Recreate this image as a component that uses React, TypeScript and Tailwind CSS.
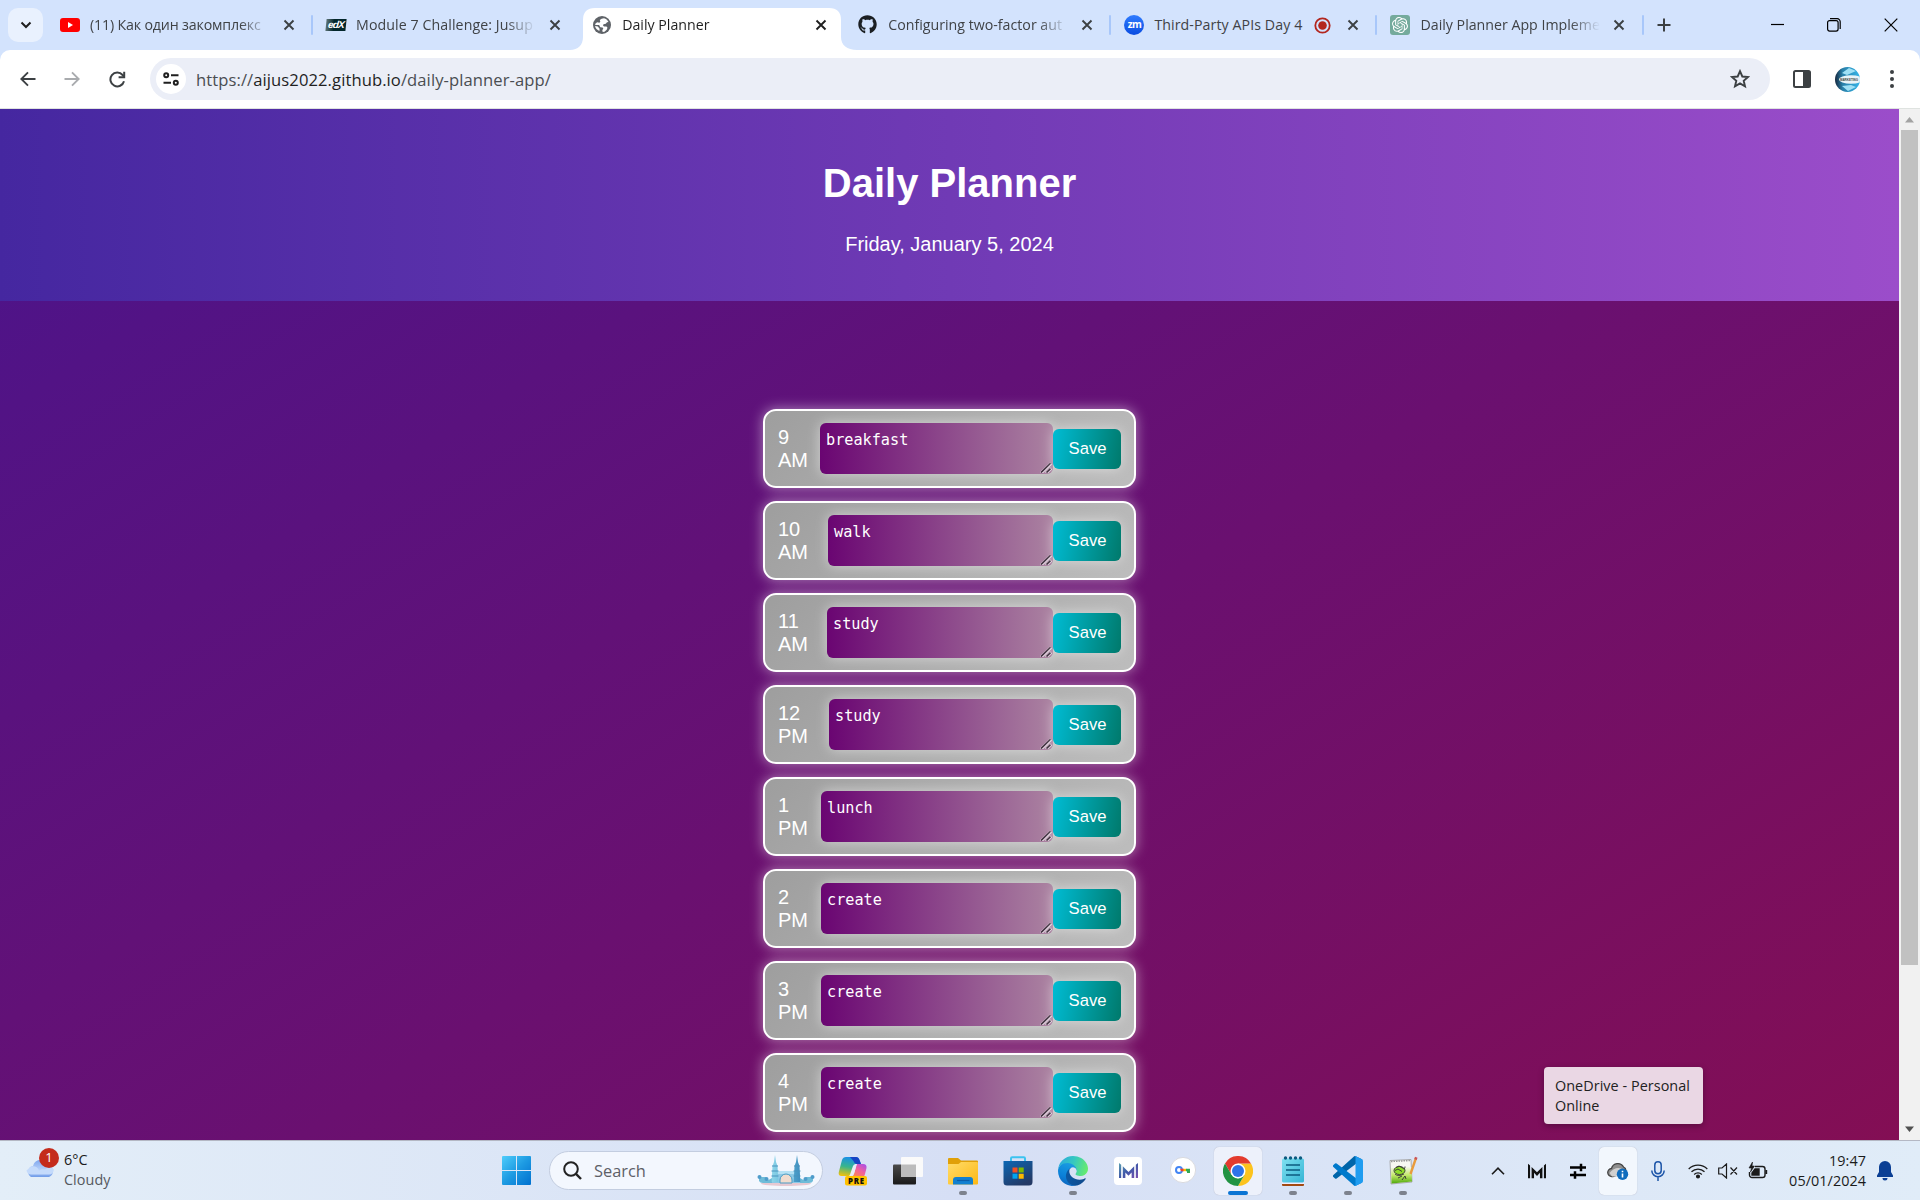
import React from "react";
import { FaGithub } from "react-icons/fa";
import { SiOpenai } from "react-icons/si";

function Close({ dark = false }: { dark?: boolean }) {
  return (
    <svg width="12" height="12" viewBox="0 0 12 12" className="shrink-0">
      <path d="M1.5 1.5 10.5 10.5M10.5 1.5 1.5 10.5" stroke={dark ? "#1f1f1f" : "#3c4043"} strokeWidth="1.9" fill="none" />
    </svg>
  );
}

function YouTubeIcon() {
  return (
    <svg width="20" height="20" viewBox="0 0 20 20">
      <rect x="0" y="3" width="20" height="14" rx="3" fill="#f00" />
      <path d="M8 7v6l5-3z" fill="#fff" />
    </svg>
  );
}

function EdxIcon() {
  return (
    <div className="flex h-5 w-5 items-center">
      <div className="flex h-3 w-5 -skew-x-6 items-center justify-center bg-linear-to-r from-[#5d7578] to-[#02262b] to-40% font-['Liberation_Sans'] text-[10px] leading-none font-bold tracking-[-0.8px] text-white italic">
        <span className="pb-px">edX</span>
      </div>
    </div>
  );
}

function GlobeIcon() {
  return (
    <svg width="20" height="20" viewBox="0 0 20 20">
      <circle cx="10" cy="10" r="9" fill="#5f6368" />
      <path d="M12 3.200c2 .5 3.600 1.800 4.500 3.800l-1.500.2-1.200 1.600-2.300.4-.5 1.200 1 1h2.500l1 1.400-.8 2-2.200 1.900-1.800.4-.4-1.900 1-1.700-.7-1.100-2.300-.2-1.200-2.200H3.400l-.3-.9 2-1.900 2.300.5.9-1-.5-1.700 1.800-1.300z" fill="#fff" />
      <path d="M3 11l2.800.6 1.800 2.100-.2 2.300C5 15 3.400 13.200 3 11z" fill="#fff" />
    </svg>
  );
}

function ZoomIcon() {
  return (
    <div className="flex h-5 w-5 items-center justify-center rounded-full bg-linear-to-b from-[#2f7bff] to-[#0a4be0] font-['Open_Sans'] text-[10px] leading-none font-bold tracking-[-0.6px] text-white">
      <span className="pb-[2px]">zm</span>
    </div>
  );
}

function GptIcon() {
  return (
    <div className="flex h-5 w-5 items-center justify-center rounded-[3px] bg-[#74aa9c] text-white">
      <SiOpenai size={16} />
    </div>
  );
}

function RecordIcon() {
  return (
    <svg width="17" height="17" viewBox="0 0 17 17" className="shrink-0">
      <circle cx="8.500" cy="8.500" r="7.200" stroke="#b3261e" strokeWidth="1.800" fill="none" />
      <circle cx="8.500" cy="8.500" r="4.300" fill="#b3261e" />
    </svg>
  );
}

type TabProps = { icon: React.ReactNode; title: string; active?: boolean; sep?: boolean; recording?: boolean; spacing: string };

function Tab({ icon, title, active, sep, recording, spacing }: TabProps) {
  return (
    <div className="relative flex h-[50px] w-[266.100px] shrink-0 items-center">
      {active && (
        <svg className="absolute top-0 left-[-7px]" width="287" height="50" viewBox="0 0 287 50">
          <path d="M0 50 C8 50 13 45 13 37 V20 Q13 8 25 8 H259 Q271 8 271 20 V37 C271 45 277 50 287 50 Z" fill="#fff" />
        </svg>
      )}
      <div className={sep ? "h-5 w-[2px] shrink-0 rounded-full bg-[#a8c7fa]" : "h-5 w-[2px] shrink-0"} />
      <div className="relative ml-[13px] h-5 w-5 shrink-0">{icon}</div>
      <div
        className={
          (active ? "relative text-[#1f1f1f] " : "text-[#3f4246] ") +
          (recording ? "w-[151px] " : "w-[180px] [mask-image:linear-gradient(to_right,black_calc(100%-30px),transparent)] ") +
          "ml-[10px] shrink-0 text-[14.200px] leading-5 whitespace-nowrap " + spacing
        }
      >
        {title}
      </div>
      {recording && <div className="mr-[9px] ml-[9px]"><RecordIcon /></div>}
      <div className={recording ? "relative ml-[7px]" : "relative ml-[13px]"}><Close dark={active} /></div>
    </div>
  );
}

function TabStrip() {
  return (
    <div className="flex h-[50px] items-center bg-[#d3e3fd]">
      <div className="ml-2 flex h-[34px] w-[35px] shrink-0 items-center justify-center rounded-[10px] bg-[#e9f1fe]">
        <svg width="12" height="8" viewBox="0 0 12 8"><path d="M1.500 1.500 6 6 10.500 1.500" stroke="#1f1f1f" strokeWidth="2" fill="none" /></svg>
      </div>
      <div className="ml-[2px] flex">
        <Tab icon={<YouTubeIcon />} title="(11) Как один закомплекс" spacing="tracking-[-0.150px]" />
        <Tab icon={<EdxIcon />} title="Module 7 Challenge: Jusup" sep spacing="tracking-[0.080px]" />
        <Tab icon={<GlobeIcon />} title="Daily Planner" active spacing="tracking-[0px]" />
        <Tab icon={<FaGithub size={19} color="#1b1f23" />} title="Configuring two-factor aut" spacing="tracking-[0px]" />
        <Tab icon={<ZoomIcon />} title="Third-Party APIs Day 4" sep recording spacing="tracking-[0.080px]" />
        <Tab icon={<GptIcon />} title="Daily Planner App Impleme" sep spacing="tracking-[0px]" />
      </div>
      <div className="h-5 w-[2px] shrink-0 rounded-full bg-[#a8c7fa]" />
      <svg className="ml-[13px]" width="14" height="14" viewBox="0 0 14 14"><path d="M7 .5v13M.5 7h13" stroke="#3c4043" strokeWidth="2" /></svg>
      <div className="ml-auto flex items-center">
        <svg width="13" height="14" viewBox="0 0 13 14"><path d="M0 6.500h13" stroke="#000" strokeWidth="1.200" /></svg>
        <svg className="ml-[43px]" width="14" height="14" viewBox="0 0 14 14" fill="none" stroke="#000" strokeWidth="1.200">
          <rect x=".6" y="2.600" width="10.500" height="10.500" rx="2" />
          <path d="M3 .7h7.200a3 3 0 0 1 3 3V11" />
        </svg>
        <svg className="mr-[22px] ml-[43px]" width="14" height="14" viewBox="0 0 14 14"><path d="M.7.7 13.300 13.300M13.300.7.700 13.300" stroke="#000" strokeWidth="1.200" /></svg>
      </div>
    </div>
  );
}

function Toolbar() {
  return (
    <div className="h-[59px] bg-[#d3e3fd]">
      <div className="flex h-[59px] items-center rounded-t-[10px] border-b border-[#dfe3e0] bg-white">
        <svg className="ml-[20px] shrink-0" width="16" height="16" viewBox="0 0 16 16" fill="none" stroke="#3c4043" strokeWidth="1.900"><path d="M15.500 8H1.500M8 1.300 1.300 8 8 14.700" /></svg>
        <svg className="ml-[28px] shrink-0" width="16" height="16" viewBox="0 0 16 16" fill="none" stroke="#a9abae" strokeWidth="1.900"><path d="M.5 8h14M8 1.300 14.700 8 8 14.700" /></svg>
        <svg className="ml-[29px] shrink-0" width="17" height="17" viewBox="0 0 17 17" fill="none" stroke="#3c4043" strokeWidth="2">
          <path d="M15 10.200A6.900 6.900 0 1 1 13.600 4L15 5.500" />
          <path d="M15.200.8V6.200H9.600" />
        </svg>
        <div className="ml-[24px] flex h-[42px] w-[1620px] shrink-0 items-center rounded-full bg-[#ebeef7]">
          <div className="ml-[6px] flex h-[30px] w-[30px] items-center justify-center rounded-full bg-white">
            <svg width="16" height="14" viewBox="0 0 16 14" fill="none" stroke="#1f1f1f" strokeWidth="2">
              <circle cx="3.200" cy="3.200" r="2" /><path d="M8 3.200h7.500M.5 10.800H8" /><circle cx="12.800" cy="10.800" r="2" />
            </svg>
          </div>
          <div className="ml-[10px] pt-px text-[16.600px] leading-6 tracking-[0.080px] whitespace-nowrap text-[#4a4d51]">
            https://<span className="text-[#1f1f1f]">aijus2022.github.io</span>/daily-planner-app/
          </div>
          <svg className="mr-[20px] ml-auto" width="20" height="20" viewBox="0 0 20 20" fill="none" stroke="#3c4043" strokeWidth="1.900">
            <path d="M10 2.200 12.300 7.500 18 8 13.700 11.800 15 17.400 10 14.400 5 17.400 6.300 11.800 2 8 7.700 7.500z" />
          </svg>
        </div>
        <svg className="ml-[23px]" width="18" height="18" viewBox="0 0 18 18"><rect x="1" y="1" width="16" height="16" rx="1.500" fill="none" stroke="#3c4043" strokeWidth="2" /><rect x="10" y="1" width="7" height="16" fill="#3c4043" /></svg>
        <svg className="ml-[24px]" width="25" height="25" viewBox="0 0 25 25">
          <defs>
            <clipPath id="av"><circle cx="12.500" cy="12.500" r="12.500" /></clipPath>
            <linearGradient id="avg" x1="0" x2="1"><stop offset="0" stopColor="#16283f" /><stop offset=".3" stopColor="#2a7fa8" /><stop offset="1" stopColor="#35b6ea" /></linearGradient>
          </defs>
          <g clipPath="url(#av)">
            <rect width="25" height="25" fill="url(#avg)" />
            <path d="M7 6 14 1l7 3-9 4zM7 19l9-1 5 2-8 4z" fill="#9fe0f5" />
            <ellipse cx="16" cy="12.500" rx="12" ry="4.200" fill="#e8f3f7" />
          </g>
          <text x="5" y="14" fontSize="4" fontWeight="700" fontFamily="Liberation Sans" fill="#444" textLength="18" lengthAdjust="spacingAndGlyphs">MARKETING</text>
        </svg>
        <svg className="ml-[30px]" width="4" height="18" viewBox="0 0 4 18" fill="#3c4043"><circle cx="2" cy="2" r="2" /><circle cx="2" cy="9" r="2" /><circle cx="2" cy="16" r="2" /></svg>
      </div>
    </div>
  );
}

const rows = [
  { hour: "9", half: "AM", text: "breakfast", label: "w-[42px]" },
  { hour: "10", half: "AM", text: "walk", label: "w-[50px]" },
  { hour: "11", half: "AM", text: "study", label: "w-[49px]" },
  { hour: "12", half: "PM", text: "study", label: "w-[51px]" },
  { hour: "1", half: "PM", text: "lunch", label: "w-[43px]" },
  { hour: "2", half: "PM", text: "create", label: "w-[43px]" },
  { hour: "3", half: "PM", text: "create", label: "w-[43px]" },
  { hour: "4", half: "PM", text: "create", label: "w-[43px]" },
];

const cardClass =
  "flex h-[79px] w-[373px] shrink-0 items-center rounded-[13px] border-2 border-white bg-[linear-gradient(135deg,#9e9e9e,#bdbdbd)] pl-[13px] shadow-[0_0_13px_rgba(255,255,255,0.500)]";

function Planner() {
  return (
    <div className="flex h-[1031px] bg-[#f1f1f1]">
      <div className="flex h-[1031px] w-[1899px] flex-col items-center overflow-hidden bg-[linear-gradient(to_bottom_right,#4a148c,#6a1070,#880e4f)] bg-[length:1899px_1221px] bg-no-repeat font-['Liberation_Sans',sans-serif] text-white">
        <header className="flex h-[192px] w-full shrink-0 flex-col items-center bg-[linear-gradient(to_right,#4527a0,#9b4dca)]">
          <h1 className="mt-[51px] text-[40px] leading-[46px] font-bold">Daily Planner</h1>
          <p className="mt-[27px] text-[20px] leading-[23px]">Friday, January 5, 2024</p>
        </header>
        <main className="mt-[108px] flex flex-col gap-[13px]">
          {rows.map((r) => (
            <div key={r.hour} className={cardClass}>
              <div className={r.label + " shrink-0 text-[20px] leading-[23px]"}>
                {r.hour}
                <br />
                {r.half}
              </div>
              <div className="relative h-[51px] flex-1 rounded-[6px] bg-[linear-gradient(to_right,#6a0572,#ab83a1)] px-[6px] py-[7px] font-['DejaVu_Sans_Mono',monospace] text-[15.200px] leading-[20px] shadow-[0_0_13px_rgba(255,255,255,0.500)]">
                {r.text}
                <svg className="absolute right-[1px] bottom-[1px]" width="12" height="11" viewBox="0 0 12 11" fill="none">
                  <path d="M1 11 11 1.500M6 11l5-4.700" stroke="#e6dbe4" strokeWidth="3" />
                  <path d="M1 10.500 10.500 1.300M6.500 10.500l4-3.800" stroke="#3b2a3a" strokeWidth="1.600" />
                </svg>
              </div>
              <div className="relative mr-[13px] flex h-10 w-[68px] shrink-0 items-center justify-center rounded-[6px] bg-[linear-gradient(100deg,#00bcd4,#00796b)] pb-px pl-px text-[16.670px] shadow-[0_0_13px_rgba(255,255,255,0.500)]">
                Save
              </div>
            </div>
          ))}
          <div className={cardClass} />
        </main>
      </div>
      <div className="flex w-[21px] flex-col items-center">
        <svg className="mt-[8px]" width="9" height="6" viewBox="0 0 9 6"><path d="M4.500 0 9 5.500H0z" fill="#a3a3a3" /></svg>
        <div className="mt-[7px] h-[835px] w-[17px] bg-[#c1c1c1]" />
        <svg className="mt-auto mb-[8px]" width="9" height="6" viewBox="0 0 9 6"><path d="M0 .5h9L4.500 6z" fill="#505050" /></svg>
      </div>
    </div>
  );
}

function StartIcon() {
  return (
    <svg width="29" height="29" viewBox="0 0 29 29">
      <defs><linearGradient id="win" gradientUnits="userSpaceOnUse" x1="0" y1="0" x2="29" y2="29"><stop offset="0" stopColor="#4fcdfb" /><stop offset=".5" stopColor="#1d9ae2" /><stop offset="1" stopColor="#0070cf" /></linearGradient></defs>
      <path d="M1 0H14V14H0V1q0-1 1-1zM15 0H28q1 0 1 1V14H15zM0 15H14V29H1q-1 0-1-1zM15 15H29V28q0 1-1 1H15z" fill="url(#win)" />
    </svg>
  );
}

function Castle() {
  return (
    <svg width="58" height="31" viewBox="0 0 58 31">
      <defs><linearGradient id="cas" x1="0" x2="1"><stop offset="0" stopColor="#8fd6ea" /><stop offset=".5" stopColor="#5fb4d6" /><stop offset="1" stopColor="#3f8fc0" /></linearGradient></defs>
      <ellipse cx="29" cy="28.500" rx="25" ry="2.400" fill="#e6c9d2" />
      <path d="M2 22h7v3q4 0 6-2h28q2 2 6 2v-3h7v4q-1 2-4 2H6q-3 0-4-2z" fill="#6fbcd8" />
      <path d="M15 16h28v12H15z" fill="#8cc9e6" />
      <path d="M15 16h28v3H15z" fill="#b5e1f4" />
      <path d="M23 28v-3a6 6 0 0 1 12 0v3z" fill="#f0dccf" stroke="#4a9cc4" strokeWidth="1" />
      <path d="M18 0l1 7 1.500 4 .8 16h-6.600l.8-16L17 7zM40 0l1 7 1.500 4 .8 16h-6.600l.8-16L39 7z" fill="url(#cas)" />
      <path d="M15 11h6M14.500 16h7M14.500 21h7M37 11h6M36.500 16h7M36.500 21h7" stroke="#4a93bd" strokeWidth="1" />
      <circle cx="2.500" cy="22" r="2" fill="#4f9ccb" /><circle cx="55.500" cy="22" r="2" fill="#4f9ccb" />
      <circle cx="9.500" cy="24" r="2" fill="#4f9ccb" /><circle cx="48.500" cy="24" r="2" fill="#4f9ccb" />
    </svg>
  );
}

function CopilotIcon() {
  return (
    <svg width="30" height="30" viewBox="0 0 30 30">
      <defs>
        <linearGradient id="cp1" x1=".4" y1="0" x2=".2" y2="1"><stop offset="0" stopColor="#1a8fe8" /><stop offset=".5" stopColor="#38b58c" /><stop offset="1" stopColor="#f5c20a" /></linearGradient>
        <linearGradient id="cp2" x1="1" y1="0" x2=".3" y2="1"><stop offset="0" stopColor="#a04df0" /><stop offset=".5" stopColor="#f05fa0" /><stop offset="1" stopColor="#ff8a4a" /></linearGradient>
      </defs>
      <path d="M8 1h10q2.500 0 3.500 3l1.500 4h-4q-2 0-3 3l-2 7q-1 2-3 2H3.500Q0 20 .8 16L4 4q1-3 4-3z" fill="url(#cp1)" />
      <path d="M12 1h6q2.500 0 3.500 3l1.500 4h-4q-2.500 0-3.500-3z" fill="#1744c4" />
      <path d="M19 8h6q4 0 3.500 4L27 18q-1 4-4 4H13q2-1 3-4l2-7q.4-2 1-3z" fill="url(#cp2)" />
      <path d="M19 8h-1.500q-2 0-2.700 2.500L12 18.500q-.5 1.500-1.500 1.500H13q2 0 3-2.500l2-6.500q.4-2 1-3z" fill="#e8edf8" />
      <rect x="7" y="20" width="22" height="9.500" rx="2" fill="#ffc200" />
      <text x="18" y="27.500" textAnchor="middle" fontFamily="Open Sans" fontSize="7.800" fontWeight="800" fill="#111" textLength="16">PRE</text>
    </svg>
  );
}

function TaskViewIcon() {
  return (
    <svg width="30" height="30" viewBox="0 0 30 30">
      <defs><linearGradient id="tv" x1="0" y1="0" x2="0" y2="1"><stop offset="0" stopColor="#4a4a4a" /><stop offset="1" stopColor="#1a1a1a" /></linearGradient></defs>
      <rect x="0" y="8.500" width="23" height="20" rx="1" fill="url(#tv)" />
      <rect x="8" y="1" width="22" height="20" rx="1" fill="#fafafa" />
      <path d="M8 8.500h15V21H8z" fill="#bcbcbc" />
    </svg>
  );
}

function FolderIcon() {
  return (
    <svg width="30" height="28" viewBox="0 0 30 28">
      <defs><linearGradient id="fo" x1="0" y1="0" x2="1" y2="1"><stop offset="0" stopColor="#ffdc6a" /><stop offset="1" stopColor="#fdb813" /></linearGradient></defs>
      <path d="M0 2Q0 1 1 1H10l3 2.500H29q1 0 1 1V12H0z" fill="#e0a008" />
      <path d="M0 7H10.500l2.500-2H29q1 0 1 1V26.500q0 1-1 1H1q-1 0-1-1z" fill="url(#fo)" />
      <path d="M5 27.500V23q0-3 3-3H22q3 0 3 3v4.500z" fill="#1180d0" />
      <path d="M9 23.500H21.500" stroke="#0b5da8" strokeWidth="1.200" />
    </svg>
  );
}

function StoreIcon() {
  return (
    <svg width="30" height="30" viewBox="0 0 30 30">
      <defs><linearGradient id="st" x1="0" y1="0" x2=".6" y2="1"><stop offset="0" stopColor="#0c67b4" /><stop offset="1" stopColor="#243a66" /></linearGradient></defs>
      <path d="M8 6V2.500q0-1.200 1.200-1.200H20.800q1.200 0 1.200 1.200V6" fill="none" stroke="#3cc3f0" strokeWidth="2" />
      <path d="M.5 5H29.500V26q0 3.500-3.500 3.500H4Q.5 29.500.5 26z" fill="url(#st)" />
      <path d="M9.500 11.500h5v5h-5z" fill="#f25022" /><path d="M15.700 11.500h5v5h-5z" fill="#7fba00" />
      <path d="M9.500 17.700h5v5h-5z" fill="#00a4ef" /><path d="M15.700 17.700h5v5h-5z" fill="#ffb900" />
    </svg>
  );
}

function EdgeIcon() {
  return (
    <svg width="30" height="30" viewBox="0 0 256 256">
      <defs>
        <linearGradient id="e1" x1="0" y1=".5" x2="1" y2=".5"><stop offset="0" stopColor="#0c59a4" /><stop offset="1" stopColor="#114a8b" /></linearGradient>
        <linearGradient id="e2" x1=".5" y1="0" x2=".2" y2="1"><stop offset="0" stopColor="#1b9de2" /><stop offset=".6" stopColor="#0b80d8" /><stop offset="1" stopColor="#0d5fb8" /></linearGradient>
        <linearGradient id="e3" x1="0" y1=".3" x2="1" y2=".5"><stop offset="0" stopColor="#2ba9de" /><stop offset=".5" stopColor="#36c8c0" /><stop offset="1" stopColor="#66eb6e" /></linearGradient>
      </defs>
      <path d="M231 190.500c-3.400 1.800-6.900 3.400-10.500 4.700a101.700 101.700 0 0 1-35.900 6.500c-47.300 0-88.500-32.500-88.500-74.300a31.500 31.500 0 0 1 16.400-27.300c-42.800 1.800-53.800 46.400-53.800 72.500 0 74 68.100 81.400 82.800 81.400 7.900 0 19.800-2.300 27-4.600l1.300-.4a128.300 128.300 0 0 0 66.600-52.800 4 4 0 0 0-5.400-5.700z" fill="url(#e1)" />
      <path d="M105.700 241.400a79.200 79.200 0 0 1-22.700-21.300 80.700 80.700 0 0 1 29.500-120c3.100-1.500 8.500-4.100 15.600-4a32.400 32.400 0 0 1 25.700 13 31.900 31.900 0 0 1 6.300 18.700c0-.2 24.500-79.600-80-79.600-43.900 0-80 41.600-80 78.200a130.200 130.200 0 0 0 12.100 56 128 128 0 0 0 156.400 67 75.500 75.500 0 0 1-62.800-8z" fill="url(#e2)" />
      <path d="M152.300 148.900c-.9 1-3.300 2.500-3.300 5.700 0 2.600 1.700 5.100 4.700 7.200 14.400 10 41.500 8.700 41.600 8.700a59.600 59.600 0 0 0 30.300-8.400 61.400 61.400 0 0 0 30.400-52.900c.3-22.400-8-37.300-11.300-43.900C223.500 23.900 177.700 0 128 0A128 128 0 0 0 0 126.200c.5-36.500 36.800-66 80-66 3.500 0 23.500.3 42 10 16.300 8.600 24.900 19 30.800 29.200 6.100 10.700 7.200 24.100 7.200 29.500 0 5.300-2.700 13.300-7.700 20z" fill="url(#e3)" />
    </svg>
  );
}

function MGlyph({ size, color }: { size: number; color: string }) {
  return (
    <svg width={size} height={size} viewBox="0 0 20 20">
      <defs><linearGradient id="mg" x1="0" y1="0" x2="1" y2="1"><stop offset="0" stopColor="#5aa0b0" /><stop offset=".5" stopColor="#3f58a8" /><stop offset="1" stopColor="#7b4fb0" /></linearGradient></defs>
      <path d="M0 2 2.300 4V18H0zM20 2 17.700 4V18H20zM4 5.500 10 11.500 16 5.500V18H13.300V12L10 15.500 6.700 12V18H4z" fill={color} />
    </svg>
  );
}

function KeyIcon() {
  return (
    <svg width="26" height="26" viewBox="0 0 26 26">
      <circle cx="13" cy="13" r="12.600" fill="#fff" stroke="#d4d4d8" strokeWidth=".8" />
      <circle cx="9" cy="13" r="3" fill="none" stroke="#4285f4" strokeWidth="2" />
      <path d="M10 11.800h4v2.400h-3z" fill="#ea4335" /><path d="M13.500 11.800h3v2.400h-3z" fill="#fbbc04" /><path d="M16 11.800h4V16h-3v-1.800h-1z" fill="#34a853" />
    </svg>
  );
}

function ChromeIcon() {
  return (
    <svg width="30" height="30" viewBox="0 0 48 48">
      <path d="M24 12H44.800A24 24 0 0 1 24 48L34.400 30z" fill="#fcc31e" />
      <path d="M3.200 12A24 24 0 0 1 44.800 12H24L13.600 30z" fill="#e33b2e" />
      <path d="M3.200 12 13.600 30 24 36l10.400-6L24 48A24 24 0 0 1 3.200 12z" fill="#229342" />
      <circle cx="24" cy="24" r="12" fill="#fff" /><circle cx="24" cy="24" r="9.600" fill="#2f73e8" />
    </svg>
  );
}

function NotepadIcon() {
  return (
    <svg width="22" height="30" viewBox="0 0 22 30">
      <defs><linearGradient id="np" x1="0" y1="0" x2="1" y2="1"><stop offset="0" stopColor="#7fe0f0" /><stop offset="1" stopColor="#35b5d5" /></linearGradient></defs>
      <rect x="0" y="24" width="22" height="6" rx="1" fill="#a34a12" /><rect x="0" y="24" width="22" height="4" fill="#eef" />
      <rect x="0" y="2.500" width="22" height="24" rx="1.500" fill="url(#np)" />
      <path d="M4 9h14M4 14h14M4 19h14" stroke="#0d5b80" strokeWidth="1.600" />
      <g fill="#0d5b80"><circle cx="3.500" cy="2" r="1.700" /><circle cx="8.500" cy="2" r="1.700" /><circle cx="13.500" cy="2" r="1.700" /><circle cx="18.500" cy="2" r="1.700" /></g>
    </svg>
  );
}

function VsCodeIcon() {
  return (
    <svg width="30" height="30" viewBox="0 0 100 100">
      <path d="M96.500 10.800 75.900.9a6.200 6.200 0 0 0-7.100 1.200L1.300 63.600a4.200 4.200 0 0 0 0 6.200l5.500 5a4.200 4.200 0 0 0 5.300.2L93.400 13.400c2.700-2.100 6.600-.1 6.600 3.300v-.3a6.300 6.300 0 0 0-3.500-5.600z" fill="#0065a9" />
      <path d="M96.500 89.200 75.900 99.100a6.200 6.200 0 0 1-7.100-1.200L1.300 36.400a4.200 4.200 0 0 1 0-6.200l5.500-5a4.200 4.200 0 0 1 5.300-.2l81.300 61.600c2.700 2.100 6.600.1 6.600-3.300v.3a6.300 6.300 0 0 1-3.500 5.600z" fill="#007acc" />
      <path d="M75.900 99.100a6.200 6.200 0 0 1-7.100-1.200c2.300 2.300 6.200.7 6.200-2.600V4.700c0-3.300-3.900-4.900-6.200-2.600a6.200 6.200 0 0 1 7.100-1.200l20.600 9.900A6.200 6.200 0 0 1 100 16.400v67.200a6.200 6.200 0 0 1-3.500 5.600z" fill="#1f9cf0" />
    </svg>
  );
}

function NppIcon() {
  return (
    <svg width="30" height="30" viewBox="0 0 30 30">
      <defs><linearGradient id="npp" x1="0" y1="0" x2="0" y2="1"><stop offset="0" stopColor="#f4f6ea" /><stop offset=".5" stopColor="#c3e86a" /><stop offset="1" stopColor="#4ea80a" /></linearGradient></defs>
      <path d="M2 4.500 23 3.500 24 26 3 28z" fill="#f7f7f2" stroke="#999" strokeWidth=".8" />
      <path d="M3 12 23.400 11 24 25.500 3.500 27.500z" fill="url(#npp)" />
      <path d="M3 5.500 22.500 4.500" stroke="#999" strokeWidth="1.500" strokeDasharray="1.500 1" />
      <ellipse cx="11.500" cy="14.500" rx="5.500" ry="4" fill="#8fdc2a" stroke="#333" strokeWidth=".9" />
      <path d="M8 11.500q3-3 6 0t3-1M7 18q3 3 9 0M7 14.500l3-1.500 4 2.500M10 22l4-2M14 24l3-4 1 3" stroke="#333" strokeWidth=".9" fill="none" />
      <path d="M22.500 18 28 2" stroke="#e89b3c" strokeWidth="2.400" /><path d="M27.500 3.500 28.300 1.200" stroke="#c9545a" strokeWidth="2.600" />
    </svg>
  );
}

function TaskApp({ children, state }: { children: React.ReactNode; state?: "open" | "active" }) {
  return (
    <div className={"relative mx-[3.500px] flex h-12 w-12 items-center justify-center rounded-[5px] " + (state === "active" ? "bg-[#edf1fb] shadow-[0_0_1px_#aab]" : "")}>
      {children}
      {state === "open" && <div className="absolute bottom-[0px] left-5 h-1 w-2 rounded-full bg-[#7d828d]" />}
      {state === "active" && <div className="absolute bottom-[0px] left-[14px] h-1 w-5 rounded-full bg-[#0a74d4]" />}
    </div>
  );
}

function Taskbar() {
  return (
    <div className="flex h-[60px] items-center border-t border-[#b4b8c4] bg-linear-to-r from-[#e3eef8] via-[#d6dff5] to-[#e0ecf8]">
      <div className="flex w-[502px] shrink-0 items-center pb-px pl-[25px]">
        <div className="relative h-[44px] w-[30px]">
          <svg className="absolute top-[9px] left-0" width="30" height="21" viewBox="0 0 30 21">
            <defs><linearGradient id="cl" x1="0" y1="0" x2="0" y2="1"><stop offset="0" stopColor="#7ea6ee" /><stop offset=".6" stopColor="#b9d2fa" /><stop offset="1" stopColor="#6f9be8" /></linearGradient></defs>
            <path d="M8 9a8.500 8.500 0 0 1 16-1 6.500 6.500 0 0 1 0 12H6a6 6 0 0 1 2-11z" fill="url(#cl)" />
            <path d="M6 9.500q6-1 8 4 3-2 6-1 4-4 9 0-1 5-5 5H6q-4-.5-4.500-4z" fill="#c4daFB" />
          </svg>
          <div className="absolute top-[0px] left-[14px] flex h-5 w-5 items-center justify-center rounded-full bg-[#c42b1c] text-[13px] text-white">1</div>
        </div>
        <div className="ml-[9px] text-[14.400px] leading-5 tracking-[0.050px]">
          <div className="text-[#1b1b1b]">6°C</div>
          <div className="text-[#55595f]">Cloudy</div>
        </div>
      </div>
      <StartIcon />
      <div className="ml-[18px] flex h-[39px] w-[274px] shrink-0 items-center rounded-full border border-[#c3cde0] bg-[#f3f7fe]">
        <svg className="ml-[13px]" width="19" height="19" viewBox="0 0 19 19" fill="none" stroke="#222" strokeWidth="2"><circle cx="8" cy="8" r="6.800" /><path d="M12.700 12.700 18 18" strokeWidth="2.400" /></svg>
        <div className="ml-[12px] pt-px text-[16.400px] text-[#5d6067]">Search</div>
        <div className="mr-[7px] ml-auto"><Castle /></div>
      </div>
      <div className="ml-[2.500px] flex">
        <TaskApp><CopilotIcon /></TaskApp>
        <TaskApp><TaskViewIcon /></TaskApp>
        <TaskApp state="open"><FolderIcon /></TaskApp>
        <TaskApp><StoreIcon /></TaskApp>
        <TaskApp state="open"><EdgeIcon /></TaskApp>
        <TaskApp><div className="flex h-7 w-7 items-center justify-center rounded-[4px] bg-white"><MGlyph size={19} color="url(#mg)" /></div></TaskApp>
        <TaskApp><div className="pb-[2px]"><KeyIcon /></div></TaskApp>
        <TaskApp state="active"><ChromeIcon /></TaskApp>
        <TaskApp state="open"><NotepadIcon /></TaskApp>
        <TaskApp state="open"><VsCodeIcon /></TaskApp>
        <TaskApp state="open"><NppIcon /></TaskApp>
      </div>
      <div className="ml-auto flex items-center">
        <svg width="14" height="8" viewBox="0 0 14 8" fill="none" stroke="#1b1b1b" strokeWidth="1.600"><path d="M1 7.200 7 1.200 13 7.200" /></svg>
        <div className="ml-[23px]"><MGlyph size={18} color="#111" /></div>
        <svg className="ml-[23px]" width="18" height="16" viewBox="0 0 18 16" stroke="#000"><path d="M1 4.500h16M1 12h16" strokeWidth="2.600" /><path d="M12 .8v7.500M6 8.300v7.500" strokeWidth="2.500" /></svg>
        <div className="ml-[12px] flex h-12 w-[38px] items-center justify-center rounded-[5px] bg-[#f2f7fd] shadow-[0_0_1px_#aab]">
          <svg width="22" height="20" viewBox="0 0 22 20">
            <path d="M6 15.500H5a4 4 0 0 1-.5-8A6.500 6.500 0 0 1 16.500 6a4 4 0 0 1 2 5z" fill="#8f8f8f" stroke="#444" strokeWidth="1.300" />
            <path d="M5 15.500 2.500 12Q8 5.500 14 7.500l4 3-6 5z" fill="#d0d0d0" />
            <circle cx="15.500" cy="13.300" r="5.700" fill="#0f6cbd" /><path d="M15.500 12.500v4M15.500 9.800v1.500" stroke="#fff" strokeWidth="1.600" />
          </svg>
        </div>
        <svg className="ml-[14px]" width="14" height="20" viewBox="0 0 14 20" fill="none" stroke="#1d55a8" strokeWidth="1.500"><rect x="3.800" y=".8" width="6.400" height="12" rx="3.200" /><path d="M.8 9.500a6.200 6.200 0 0 0 12.400 0M7 15.700V20" /></svg>
        <svg className="ml-[23px]" width="20" height="16" viewBox="0 0 20 16" fill="none" stroke="#1b1b1b" strokeWidth="1.300"><path d="M.7 6a13 13 0 0 1 18.600 0M3.500 8.800a9.200 9.200 0 0 1 13 0M6.200 11.500a5.400 5.400 0 0 1 7.600 0" /><circle cx="10" cy="13.500" r="1.400" fill="#1b1b1b" /></svg>
        <svg className="ml-[10px]" width="20" height="16" viewBox="0 0 20 16" fill="none" stroke="#1b1b1b" strokeWidth="1.200"><path d="M.7 5v6H4l4.500 4V1L4 5zM12.500 4.500l6.500 7M19 4.500l-6.500 7" /></svg>
        <svg className="ml-[10px]" width="21" height="18" viewBox="0 0 21 18" fill="none" stroke="#1b1b1b" strokeWidth="1.400"><path d="M7 4.500h7.500a2.500 2.500 0 0 1 2.500 2.500v6a2.500 2.500 0 0 1-2.500 2.500H4A2.500 2.500 0 0 1 1.500 13V10M18.500 8v4" /><path d="M7 7h4v6H4v-2z" fill="#1b1b1b" /><path d="M4.500 0 1 6h2.500L2.500 10 6.500 4H4z" fill="#1b1b1b" strokeWidth=".6" /></svg>
        <div className="ml-[19px] w-[78px] text-right text-[14.400px] leading-5 tracking-[0.050px] text-[#1b1b1b]">
          <div>19:47</div>
          <div>05/01/2024</div>
        </div>
        <svg className="mr-[27px] ml-[11px]" width="16" height="20" viewBox="0 0 16 20" fill="#0b3f94"><path d="M8 0a6 6 0 0 1 6 6v5l2 3.500v1.500H0v-1.500L2 11V6a6 6 0 0 1 6-6zM5.500 17h5a2.500 2.500 0 0 1-5 0z" /></svg>
      </div>
    </div>
  );
}

export default function App() {
  return (
    <div className="relative flex h-[1200px] w-[1920px] flex-col overflow-hidden font-['Open_Sans','Noto_Sans',sans-serif]">
      <TabStrip />
      <Toolbar />
      <Planner />
      <Taskbar />
      <div className="absolute top-[1067px] left-[1544px] h-[57px] w-[159px] rounded-[4px] bg-[#ead7e4] pt-[9px] pl-[11px] text-[14.400px] leading-5 tracking-[0.050px] text-[#222] shadow-[0_2px_6px_rgba(0,0,0,0.300)]">
        OneDrive - Personal
        <br />
        Online
      </div>
    </div>
  );
}
